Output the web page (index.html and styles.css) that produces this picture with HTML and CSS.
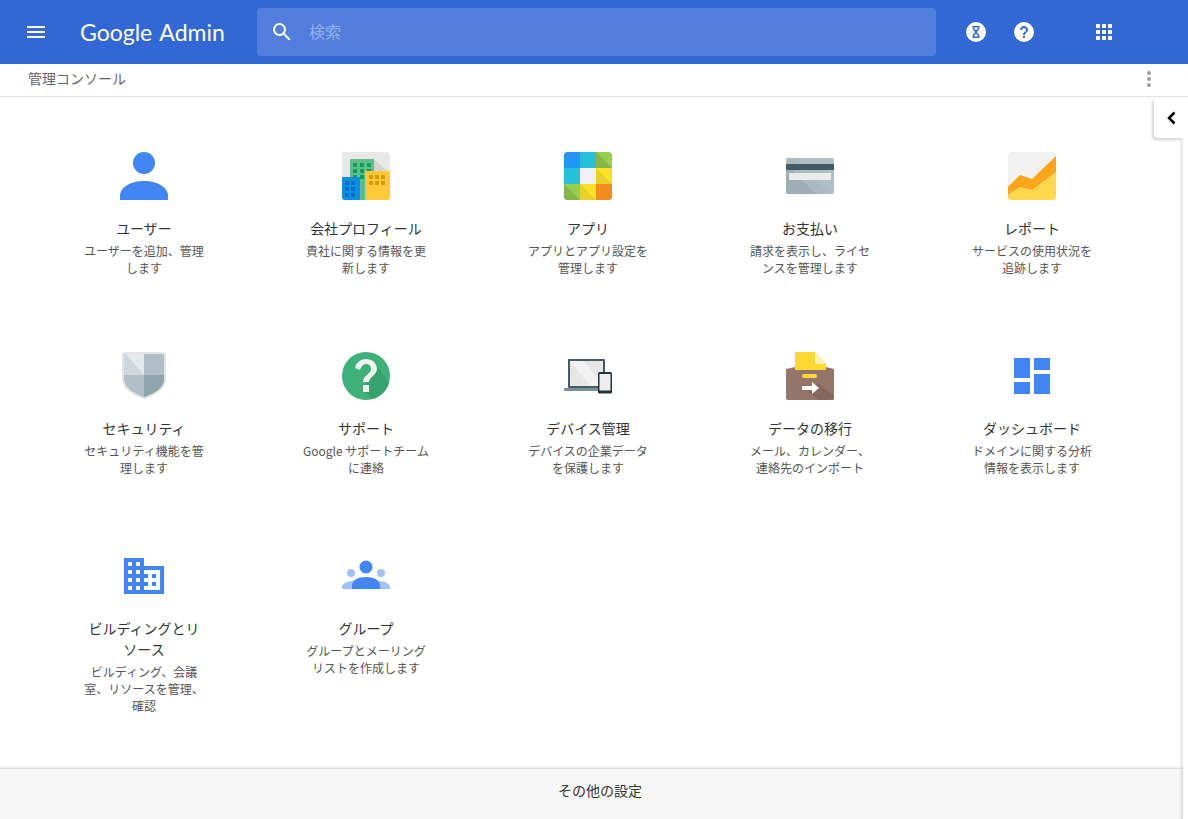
FILE: index.html
```html
<!DOCTYPE html>
<html lang="ja">
<head>
<meta charset="utf-8">
<title>Google Admin</title>
<link rel="stylesheet" href="styles.css">
</head>
<body>
<header class="topbar">
  <svg class="menu-icon" width="24" height="24" viewBox="0 0 24 24"><path fill="#fff" d="M3 18h18v-2H3v2zm0-5h18v-2H3v2zm0-7v2h18V6H3z"/></svg>
  <div class="logo">Google Admin</div>
  <div class="search">
    <svg width="24" height="24" viewBox="0 0 24 24"><path fill="#fff" d="M15.500 14h-.79l-.28-.27A6.470 6.470 0 0 0 16 9.500 6.500 6.500 0 1 0 9.500 16c1.610 0 3.090-.59 4.230-1.570l.27.28v.79l5 4.990L20.490 19l-4.990-5zm-6 0C7.010 14 5 11.990 5 9.500S7.010 5 9.500 5 14 7.010 14 9.500 11.990 14 9.500 14z"/></svg>
    <span class="search-text">検索</span>
  </div>
  <div class="top-actions">
    <svg class="act-timer" width="24" height="24" viewBox="0 0 24 24"><circle cx="12" cy="12" r="10" fill="#fff"/><path fill="none" stroke="#3367d6" stroke-width="1.500" d="M8.500 6.800h7M8.500 17.200h7M9.500 6.800v1.700c0 1.300 2.500 2.300 2.500 3.500s-2.500 2.200-2.500 3.500v1.700M14.500 6.800v1.700c0 1.300-2.500 2.300-2.500 3.500s2.500 2.200 2.500 3.500v1.700"/></svg>
    <svg class="act-help" width="24" height="24" viewBox="0 0 24 24"><circle cx="12" cy="12" r="10" fill="#fff"/><path fill="#3367d6" d="M11 16h2v2h-2zM12 6c-2.210 0-4 1.790-4 4h2c0-1.100.9-2 2-2s2 .9 2 2c0 2-3 1.750-3 5h2c0-2.250 3-2.500 3-5 0-2.210-1.790-4-4-4z"/></svg>
    <svg class="act-apps" width="24" height="24" viewBox="0 0 24 24"><path fill="#fff" d="M4 8h4V4H4v4zm6 12h4v-4h-4v4zm-6 0h4v-4H4v4zm0-6h4v-4H4v4zm6 0h4v-4h-4v4zm6-10v4h4V4h-4zm-6 4h4V4h-4v4zm6 6h4v-4h-4v4zm0 6h4v-4h-4v4z"/></svg>
  </div>
</header>
<div class="crumbbar">
  <span class="crumb">管理コンソール</span>
  <svg class="more" width="6" height="18" viewBox="0 0 6 18"><circle cx="3" cy="3" r="2" fill="#9e9e9e"/><circle cx="3" cy="9" r="2" fill="#9e9e9e"/><circle cx="3" cy="15" r="2" fill="#9e9e9e"/></svg>
</div>
<main class="content">
  <div class="grid">
    <a class="card">
      <svg class="icon" viewBox="0 0 48 48"><circle cx="24" cy="11" r="11" fill="#4285f4"/><path fill="#4285f4" d="M0 48v-4c0-9 11-15 24-15s24 6 24 15v4z"/></svg>
      <div class="title">ユーザー</div>
      <div class="desc">ユーザーを追加、管理します</div>
    </a>
    <a class="card">
      <svg class="icon" viewBox="0 0 48 48"><rect width="48" height="48" rx="3" fill="#e8e8e8"/><path fill="#d4d4d4" d="M32 7l16 15v2H32z"/><rect x="8" y="7" width="24" height="41" fill="#5fbd8c"/><path fill="#0f9d58" d="M11 11h4v4h-4zM18 11h4v4h-4zM25 11h4v4h-4zM11 17h4v4h-4zM18 17h4v4h-4zM25 17h4v4h-4zM11 23h4v4h-4zM18 23h4v4h-4z"/><path fill="#ffca38" d="M23 19h25v26a3 3 0 0 1-3 3H23z"/><path fill="#d59b05" d="M27 23h4v4h-4zM33 23h4v4h-4zM39 23h4v4h-4zM27 29h4v4h-4zM33 29h4v4h-4zM39 29h4v4h-4z"/><path fill="#0b8ee8" d="M0 25h18v23H3a3 3 0 0 1-3-3z"/><path fill="#0873bf" d="M3 29h4v4H3zM9 29h4v4H9zM3 35h4v4H3zM9 35h4v4H9zM3 41h4v4H3zM9 41h4v4H9z"/></svg>
      <div class="title">会社プロフィール</div>
      <div class="desc">貴社に関する情報を更新します</div>
    </a>
    <a class="card">
      <svg class="icon" viewBox="0 0 48 48"><defs><clipPath id="rr"><rect width="48" height="48" rx="3.500"/></clipPath></defs><g clip-path="url(#rr)"><rect width="16" height="16" fill="#2196f3"/><rect x="16" width="16" height="16" fill="#26c0da"/><rect x="32" width="16" height="16" fill="#97cf4f"/><path fill="#84b64a" d="M32 0l16 16H32z"/><rect y="16" width="16" height="16" fill="#26c0da"/><rect x="16" y="16" width="16" height="16" fill="#f1f1f1"/><rect x="32" y="16" width="16" height="16" fill="#fde024"/><path fill="#e8cf2a" d="M32 16l16 16H32z"/><rect y="32" width="16" height="16" fill="#97cf4f"/><path fill="#84b64a" d="M0 32l16 16H0z"/><rect x="16" y="32" width="16" height="16" fill="#fde024"/><path fill="#e8cf2a" d="M16 32l16 16H16z"/><rect x="32" y="32" width="16" height="16" fill="#f28c1c"/></g></svg>
      <div class="title">アプリ</div>
      <div class="desc">アプリとアプリ設定を管理します</div>
    </a>
    <a class="card">
      <svg class="icon" viewBox="0 0 48 48"><rect y="6" width="48" height="36" rx="2" fill="#b0bec5"/><path fill="#9fadb4" d="M0 12l30 30H2a2 2 0 0 1-2-2z"/><path fill="#a4b2b9" d="M0 6h8l36 36H30L0 12z" opacity=".5"/><rect y="12" width="48" height="6" fill="#455a64"/><rect x="3" y="21" width="42" height="7" fill="#e9ebec"/></svg>
      <div class="title">お支払い</div>
      <div class="desc">請求を表示し、ライセンスを管理します</div>
    </a>
    <a class="card">
      <svg class="icon" viewBox="0 0 48 48"><rect width="48" height="48" rx="3.500" fill="#f1f1f1"/><path fill="#ffd84c" d="M0 43l12-8 12 3 24-18v25a3 3 0 0 1-3 3H3a3 3 0 0 1-3-3z"/><path fill="#fba51b" d="M0 34.700L12 23l12 4L48 4v16L24 38l-12-3L0 43z"/></svg>
      <div class="title">レポート</div>
      <div class="desc">サービスの使用状況を追跡します</div>
    </a>

    <a class="card">
      <svg class="icon" viewBox="0 0 48 48"><path fill="#e4e4e4" d="M5 0h38a3 3 0 0 1 3 3v24c0 10-12 17-22 20C14 44 2 37 2 27V3a3 3 0 0 1 3-3z"/><path fill="#b0bec5" d="M6 2h36a2 2 0 0 1 2 2v23c0 9-11 15-20 18C15 42 4 36 4 27V4a2 2 0 0 1 2-2z"/><path fill="#cfd8dc" d="M6 2h18v21H4V4a2 2 0 0 1 2-2z"/><path fill="#e4e9eb" d="M6 2h18v21z"/><path fill="#90a4ae" d="M24 23h20v4c0 3-1 6-3 8zM24 23l17 12c-4 5-11 8-17 10z"/></svg>
      <div class="title">セキュリティ</div>
      <div class="desc">セキュリティ機能を管理します</div>
    </a>
    <a class="card">
      <svg class="icon" viewBox="0 0 48 48"><circle cx="24" cy="24" r="24" fill="#3eb17a"/><path fill="#36a26e" d="M33 11l14 20c-3 9-10 15-17 16L21 38z"/><path fill="#f1f1f1" d="M21 33h6v7h-6zM24 7c-6 0-10 4-11 9l5 2c1-3 3-6 6-6s5 2 5 5c0 5-8 6-8 13h6c0-5 8-7 8-13 0-6-5-10-11-10z"/></svg>
      <div class="title">サポート</div>
      <div class="desc desc-wide">Google サポートチームに連絡</div>
    </a>
    <a class="card">
      <svg class="icon" viewBox="0 0 48 48"><rect x="4" y="7" width="37" height="29" rx="1" fill="#455a64"/><rect x="6" y="9" width="33" height="25" fill="#e6e6e6"/><path fill="#f2f2f2" d="M6 9h14l20 25H26z"/><path fill="#78909c" d="M0 36h38v3H2a2 2 0 0 1-2-3z"/><rect x="34" y="20" width="14" height="21.500" rx="1.500" fill="#263238"/><rect x="35.500" y="22" width="11" height="16.500" fill="#eeeeee"/></svg>
      <div class="title">デバイス管理</div>
      <div class="desc">デバイスの企業データを保護します</div>
    </a>
    <a class="card">
      <svg class="icon" viewBox="0 0 48 48"><path fill="#fdd835" d="M9 2a2 2 0 0 1 2-2h18l11 12v18H9z"/><path fill="#fff3b0" d="M29 0l11 12H31a2 2 0 0 1-2-2z"/><path fill="#937669" d="M0 17l9-2v3h31v-3l8 2v29a2 2 0 0 1-2 2H2a2 2 0 0 1-2-2z"/><path fill="#846a5e" d="M33 32l15 12v2a2 2 0 0 1-2 2H33L16 36z"/><rect x="16" y="22" width="15" height="4" rx="2" fill="#fdd835"/><path fill="#fff" d="M16 34h10v-4l7 6-7 6v-4H16z"/></svg>
      <div class="title">データの移行</div>
      <div class="desc">メール、カレンダー、連絡先のインポート</div>
    </a>
    <a class="card">
      <svg class="icon" viewBox="0 0 48 48"><path fill="#4285f4" d="M6 6h16v20H6zM26 6h16v12H26zM26 22h16v20H26zM6 30h16v12H6z"/></svg>
      <div class="title">ダッシュボード</div>
      <div class="desc">ドメインに関する分析情報を表示します</div>
    </a>

    <a class="card">
      <svg class="icon" viewBox="0 0 48 48"><path fill="#4285f4" fill-rule="evenodd" d="M4 6h20v8h20v28H4zM8 10v4h4v-4zM16 10v4h4v-4zM8 18v4h4v-4zM16 18v4h4v-4zM8 26v4h4v-4zM16 26v4h4v-4zM8 34v4h4v-4zM16 34v4h4v-4zM24 18v4h4v4h-4v4h4v4h-4v4h16V18zM32 22h4v4h-4zM32 30h4v4h-4z"/></svg>
      <div class="title">ビルディングとリソース</div>
      <div class="desc">ビルディング、会議室、リソースを管理、確認</div>
    </a>
    <a class="card">
      <svg class="icon" viewBox="0 0 48 48"><g fill="#a0c2f9"><circle cx="9" cy="21" r="4"/><circle cx="39" cy="21" r="4"/><path d="M0 37v-2c0-3 5-6 11-6 4 0 8 1 10 3v5zM48 37v-2c0-3-5-6-11-6-4 0-8 1-10 3v5z"/></g><g fill="#4285f4"><circle cx="24" cy="15" r="6.500"/><path d="M10 37v-3c0-6 6-9 14-9s14 3 14 9v3z"/></g></svg>
      <div class="title">グループ</div>
      <div class="desc">グループとメーリングリストを作成します</div>
    </a>
  </div>
  <button class="collapse" type="button" aria-label="閉じる">
    <svg width="24" height="24" viewBox="0 0 24 24"><path fill="none" stroke="#000" stroke-width="2.500" d="M15.500 6.500L10 12l5.500 5.500"/></svg>
  </button>
</main>
<footer class="footer"><span class="footer-text">その他の設定</span></footer>
<div class="edge-shade"></div>
</body>
</html>
```

FILE: styles.css
```css
* { box-sizing: border-box; }
html, body { height: 100%; }
body {
  margin: 0;
  display: flex;
  flex-direction: column;
  overflow: hidden;
  background: #fff;
  font-family: "Noto Sans CJK JP", "Roboto", sans-serif;
  color: #333;
}
.topbar {
  flex: none;
  height: 64px;
  background: #3367d6;
  display: flex;
  align-items: center;
  padding-left: 24px;
}
.menu-icon { flex: none; }
.logo {
  flex: none;
  width: 177px;
  margin-left: 32px;
  padding-bottom: 1px;
  font-family: "Lato", sans-serif;
  font-size: 23px;
  word-spacing: 2px;
  color: #fff;
  white-space: nowrap;
}
.search {
  flex: none;
  width: 679px;
  height: 48px;
  display: flex;
  align-items: center;
  padding-left: 13px;
  background: rgba(255, 255, 255, .15);
  border-radius: 4px;
}
.search-text {
  margin-left: 15px;
  padding-bottom: 2px;
  font-size: 16px;
  color: rgba(255, 255, 255, .4);
}
.top-actions {
  display: flex;
  align-items: center;
  margin-left: 28px;
}
.act-help { margin-left: 24px; }
.act-apps { margin-left: 56px; }
.crumbbar {
  flex: none;
  height: 33px;
  display: flex;
  align-items: center;
  justify-content: space-between;
  padding: 0 36px 0 28px;
  border-bottom: 1px solid #e0e0e0;
}
.crumb { padding-bottom: 4px; font-size: 14px; color: #666; }
.more { margin-bottom: 2px; }
.content {
  flex: 1;
  position: relative;
  min-height: 0;
  padding: 55px 0 0 33px;
}
.grid {
  display: grid;
  grid-template-columns: repeat(5, 222px);
  grid-auto-rows: 200px;
}
.card {
  display: flex;
  flex-direction: column;
  align-items: center;
  text-align: center;
}
.icon { width: 48px; height: 48px; flex: none; }
.title {
  width: 125px;
  margin-top: 18px;
  font-size: 14px;
  line-height: 21px;
  color: #333;
}
.desc {
  width: 127px;
  margin-top: 3px;
  font-size: 12px;
  line-height: 17px;
  color: #555;
}
.collapse {
  position: absolute;
  top: 1px;
  right: 5px;
  z-index: 2;
  width: 29px;
  height: 40px;
  padding: 0 0 0 5px;
  border: 0;
  display: flex;
  align-items: center;
  justify-content: center;
  background: #fff;
  border-radius: 4px 0 0 4px;
  box-shadow: -2px 2px 3px rgba(0, 0, 0, .18);
}
.footer {
  flex: none;
  height: 51px;
  margin-right: 5px;
  display: flex;
  align-items: center;
  justify-content: center;
  padding-left: 17px;
  background: #f7f7f7;
  border-top: 1px solid #e0e0e0;
  box-shadow: 0 -1px 2px rgba(0, 0, 0, .08);
  font-size: 14px;
  color: #333;
}
.footer-text { padding-bottom: 8px; }
.edge-shade {
  position: fixed;
  top: 137px;
  bottom: 0;
  right: 5px;
  width: 4px;
  background: linear-gradient(to right, rgba(0, 0, 0, 0), rgba(0, 0, 0, .1));
}
```
